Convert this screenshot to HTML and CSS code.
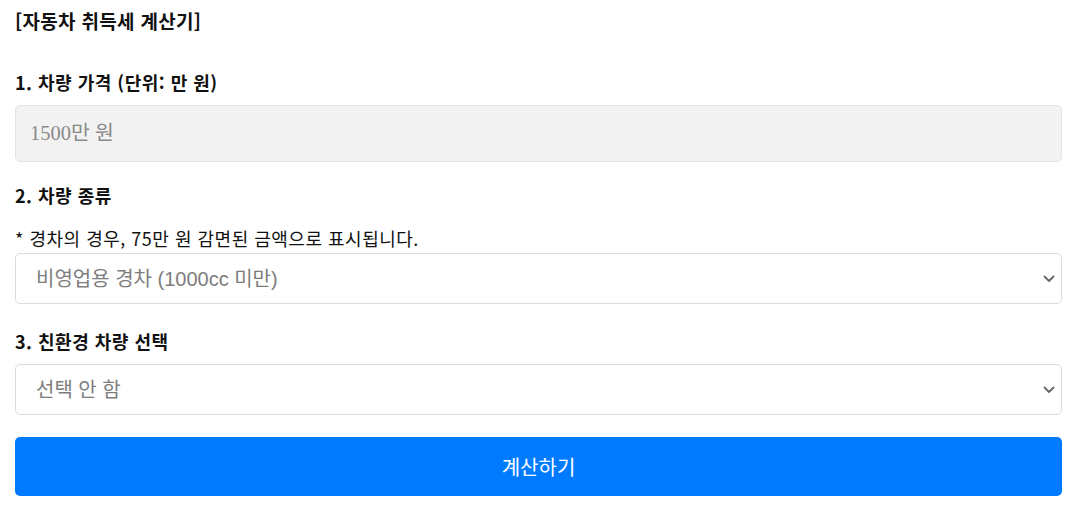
FILE: index.html
```html
<!DOCTYPE html>
<html lang="ko">
<head>
<meta charset="utf-8">
<title>자동차 취득세 계산기</title>
<link rel="stylesheet" href="styles.css">
</head>
<body>
<div class="page">
  <h3 class="title">[자동차 취득세 계산기]</h3>

  <label class="label label-first" for="price">1. 차량 가격 (단위: 만 원)</label>
  <input id="price" class="input" type="text" placeholder="1500만 원">

  <label class="label label-second" for="kind">2. 차량 종류</label>
  <p class="note">* 경차의 경우, 75만 원 감면된 금액으로 표시됩니다.</p>
  <div class="select-wrap">
    <select id="kind" class="select">
      <option>비영업용 경차 (1000cc 미만)</option>
    </select>
    <svg class="chevron" width="12" height="8" viewBox="0 0 12 8"><path d="M1.5 1.5 L6 6 L10.5 1.5" fill="none" stroke="#666" stroke-width="1.8" stroke-linecap="round" stroke-linejoin="round"/></svg>
  </div>

  <label class="label label-third" for="eco">3. 친환경 차량 선택</label>
  <div class="select-wrap">
    <select id="eco" class="select">
      <option>선택 안 함</option>
    </select>
    <svg class="chevron" width="12" height="8" viewBox="0 0 12 8"><path d="M1.5 1.5 L6 6 L10.5 1.5" fill="none" stroke="#666" stroke-width="1.8" stroke-linecap="round" stroke-linejoin="round"/></svg>
  </div>

  <button class="button" type="button">계산하기</button>
</div>
</body>
</html>
```
FILE: styles.css
```css
html, body {
  margin: 0;
  padding: 0;
  background: #ffffff;
}

.page {
  display: flex;
  flex-direction: column;
  padding: 9px 13px 0 15px;
  font-family: "Noto Sans CJK KR", "Noto Sans", sans-serif;
  color: #111;
}

.title {
  margin: 0;
  font-size: 19px;
  line-height: 24px;
  font-weight: 700;
  letter-spacing: 0.3px;
}

.label {
  display: block;
  font-size: 18px;
  line-height: 24px;
  font-weight: 700;
  letter-spacing: 0.5px;
}

.label-first { margin-top: 37px; margin-bottom: 11px; }
.label-second { margin-top: 21px; }
.label-third { margin-top: 25px; margin-bottom: 11px; }

.note {
  margin: 20px 0 4px;
  font-size: 18px;
  line-height: 22px;
  letter-spacing: 0.5px;
}

.input {
  box-sizing: border-box;
  height: 57px;
  width: 100%;
  margin: 0;
  padding: 0 14px;
  border: 1px solid #e3e3e3;
  border-radius: 5px;
  background: #f2f2f2;
  font-family: "Liberation Serif", "Noto Sans CJK KR", serif;
  font-size: 20.5px;
  color: #333;
  outline: none;
}

.input::placeholder {
  color: #8a8a8a;
}

.select-wrap {
  position: relative;
}

.select {
  box-sizing: border-box;
  width: 100%;
  height: 51px;
  margin: 0;
  padding: 0 40px 0 20px;
  border: 1px solid #dcdcdc;
  border-radius: 5px;
  background: #fff;
  -webkit-appearance: none;
  appearance: none;
  font-family: "Liberation Sans", "Noto Sans CJK KR", sans-serif;
  font-size: 20px;
  color: #7d7d7d;
  outline: none;
}

.chevron {
  position: absolute;
  right: 7px;
  top: 22px;
  pointer-events: none;
}

.button {
  box-sizing: border-box;
  margin-top: 22px;
  width: 100%;
  height: 59px;
  border: none;
  border-radius: 5px;
  background: #007bff;
  color: #fff;
  font-family: "Noto Sans CJK KR", sans-serif;
  font-size: 20px;
  cursor: pointer;
}
```
